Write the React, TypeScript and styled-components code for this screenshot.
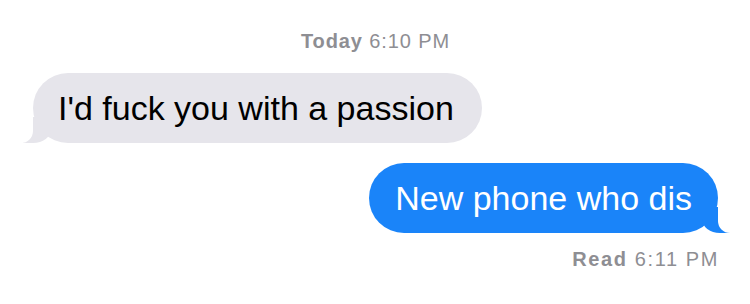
import React from "react";
import styled, { createGlobalStyle } from "styled-components";

const Global = createGlobalStyle`
  html, body { margin: 0; padding: 0; background: #ffffff; }
  body { font-family: "Liberation Sans", Arial, sans-serif; -webkit-font-smoothing: antialiased; }
`;

const Thread = styled.div`
  width: 750px;
  height: 304px;
  box-sizing: border-box;
  padding: 29px 32px 0 33px;
  display: flex;
  flex-direction: column;
  overflow: hidden;
`;

const Stamp = styled.div<{ $align: "center" | "right" }>`
  font-size: 20px;
  line-height: 24px;
  letter-spacing: ${(p) => (p.$align === "center" ? "0.9px" : "1.6px")};
  color: #8e8e93;
  text-align: ${(p) => p.$align};
  margin: ${(p) => (p.$align === "center" ? "0 0 20px 0" : "14px -1px 0 0")};
  b { font-weight: 700; }
`;

const Row = styled.div<{ $mine?: boolean }>`
  display: flex;
  justify-content: ${(p) => (p.$mine ? "flex-end" : "flex-start")};
  margin-top: ${(p) => (p.$mine ? "20px" : "0")};
`;

const Bubble = styled.div<{ $mine?: boolean }>`
  position: relative;
  height: 70px;
  box-sizing: border-box;
  padding: ${(p) => (p.$mine ? "0 26px 0 26px" : "0 28px 0 25px")};
  border-radius: 35px;
  font-size: 34px;
  line-height: 70px;
  white-space: nowrap;
  color: ${(p) => (p.$mine ? "#ffffff" : "#000000")};
  background: ${(p) => (p.$mine ? "#1a84f9" : "#e6e5eb")};

  &::before {
    content: "";
    position: absolute;
    bottom: 0;
    ${(p) => (p.$mine ? "right: -12px;" : "left: -10px;")}
    width: 28px;
    height: 26px;
    background: ${(p) => (p.$mine ? "#1a84f9" : "#e6e5eb")};
    ${(p) =>
      p.$mine
        ? "border-bottom-left-radius: 18px 14px;"
        : "border-bottom-right-radius: 18px 14px;"}
  }

  &::after {
    content: "";
    position: absolute;
    bottom: 0;
    ${(p) => (p.$mine ? "right: -20px;" : "left: -20px;")}
    width: 20px;
    height: 28px;
    background: #ffffff;
    ${(p) =>
      p.$mine
        ? "border-bottom-left-radius: 12px;"
        : "border-bottom-right-radius: 12px;"}
  }
`;

export default function App() {
  return (
    <>
      <Global />
      <Thread>
        <Stamp $align="center">
          <b>Today</b> 6:10 PM
        </Stamp>
        <Row>
          <Bubble>I'd fuck you with a passion</Bubble>
        </Row>
        <Row $mine>
          <Bubble $mine>New phone who dis</Bubble>
        </Row>
        <Stamp $align="right">
          <b>Read</b> 6:11 PM
        </Stamp>
      </Thread>
    </>
  );
}
